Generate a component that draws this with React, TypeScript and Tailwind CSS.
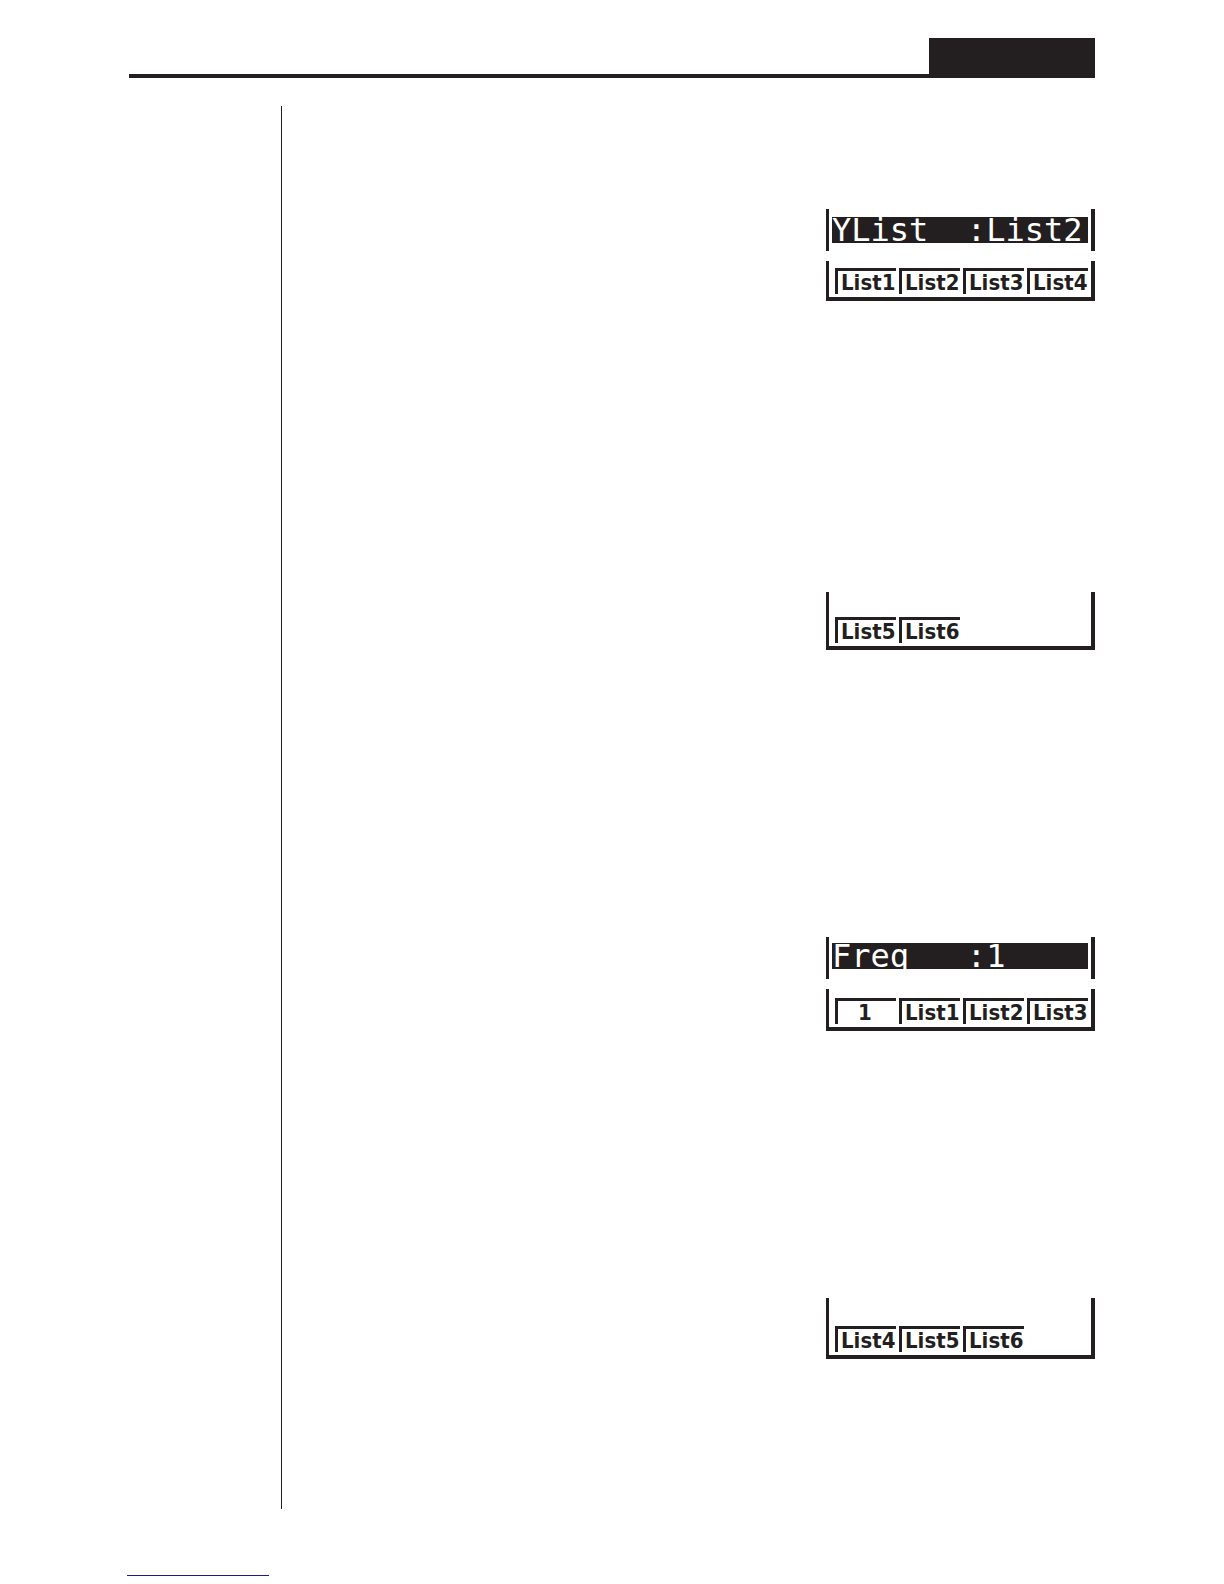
import React from "react";

const SoftKey = ({ label }: { label: string }) => {
  return (
    <button
      type="button"
      className={`h-[26px] w-[61px] border-t-[3px] border-l-[3px] border-[#231f20] text-left font-['DejaVu_Sans_Condensed','DejaVu_Sans',sans-serif] text-[22px] leading-[22px] font-bold whitespace-nowrap ${
        label.length === 1 ? "pl-5" : "pl-[3px]"
      }`}
    >
      {label}
    </button>
  );
};

const SettingLine = ({
  text,
  className,
}: {
  text: string;
  className: string;
}) => {
  return (
    <div
      className={`mb-2.5 h-[42px] border-r-4 border-l-[3px] border-[#231f20] px-[3px] ${className}`}
    >
      <p className="h-[26px] bg-[#231f20] font-['DejaVu_Sans_Mono',monospace] text-[32px] leading-[26px] whitespace-pre text-white">
        {text}
      </p>
    </div>
  );
};

const SoftKeyBar = ({
  keys,
  className,
}: {
  keys: string[];
  className: string;
}) => {
  return (
    <div
      className={`flex items-end gap-[3px] border-r-4 border-b-4 border-l-[3px] border-[#231f20] pb-[3px] pl-1.5 ${className}`}
    >
      {keys.map((key) => (
        <SoftKey key={key} label={key} />
      ))}
    </div>
  );
};

const App = () => {
  return (
    <div className="min-h-screen bg-white pt-[38px] text-[#231f20]">
      <header className="mx-[129px] flex justify-end border-b-4 border-[#231f20]">
        <div className="h-9 w-[166px] bg-[#231f20]"></div>
      </header>

      <div className="mx-[129px] mt-7 flex">
        <aside className="w-[152px] shrink-0"></aside>

        <main className="flex flex-1 flex-col items-end border-l border-[#231f20] pt-[103px] pb-[150px]">
          <section className="w-[269px]">
            <SettingLine text="YList  :List2" className="pt-2" />
            <SoftKeyBar
              keys={["List1", "List2", "List3", "List4"]}
              className="h-10"
            />
          </section>

          <section className="mt-[291px] w-[269px]">
            <SoftKeyBar keys={["List5", "List6"]} className="h-[58px]" />
          </section>

          <section className="mt-[287px] w-[269px]">
            <SettingLine text="Freq   :1" className="pt-1.5" />
            <SoftKeyBar
              keys={["1", "List1", "List2", "List3"]}
              className="h-[42px]"
            />
          </section>

          <section className="mt-[267px] w-[269px]">
            <SoftKeyBar
              keys={["List4", "List5", "List6"]}
              className="h-[61px]"
            />
          </section>
        </main>
      </div>

      <footer className="mt-14 px-[127px]">
        <a
          href="#"
          className="block h-[11px] w-[142px] border-b border-[#1b1b8f]"
        ></a>
      </footer>
    </div>
  );
};

export default App;
